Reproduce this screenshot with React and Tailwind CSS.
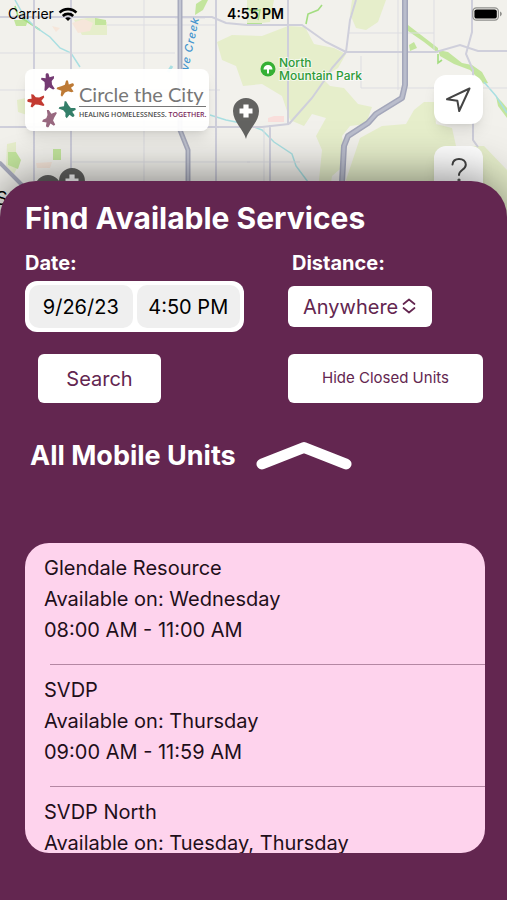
import React, { useState } from 'react';

const units = [
  { name: 'Glendale Resource', days: 'Wednesday', hours: '08:00 AM - 11:00 AM' },
  { name: 'SVDP', days: 'Thursday', hours: '09:00 AM - 11:59 AM' },
  { name: 'SVDP North', days: 'Tuesday, Thursday' },
];

const StatusBar = () => (
  <div className="relative grid grid-cols-3 items-center h-7 pl-2 pr-1 text-sm text-black">
    <div className="flex items-center gap-1">
      <span>Carrier</span>
      <svg width="20" height="15" viewBox="0 0 20 15" fill="none" stroke="black" strokeWidth="2.6">
        <path d="M1.6 5.6 C6 1 14 1 18.4 5.6" />
        <path d="M4.8 9 C7.6 6.2 12.4 6.2 15.2 9" />
        <path d="M10 14 L7.2 11.2 C8.6 9.9 11.4 9.9 12.8 11.2 Z" fill="black" stroke="none" />
      </svg>
    </div>
    <span className="text-center font-semibold">4:55 PM</span>
    <svg className="justify-self-end" width="31" height="14" viewBox="0 0 31 14">
      <rect x="0.8" y="0.8" width="25.6" height="12.4" rx="3.6" fill="#f4f3ee" stroke="#8f8f8c" strokeWidth="1.2" />
      <rect x="2.4" y="2.4" width="22.4" height="9.2" rx="2.2" fill="black" />
      <path d="M28 4.6 C30.4 5.6 30.4 8.4 28 9.4 Z" fill="#8f8f8c" />
    </svg>
  </div>
);

const Pin = ({ x, y }) => (
  <g transform={`translate(${x} ${y})`}>
    <path d="M0 28 C-2 19 -13 11 -13 0 A13 13 0 0 1 13 0 C13 11 2 19 0 28 Z" fill="#636361" />
    <path d="M-2.6 -6.5 H2.6 V-2.6 H6.5 V2.6 H2.6 V6.5 H-2.6 V2.6 H-6.5 V-2.6 H-2.6 Z" fill="white" />
  </g>
);

const MapView = () => (
  <svg
    className="absolute inset-0 w-full h-full"
    viewBox="0 0 507 224"
    preserveAspectRatio="xMidYMin slice"
    fill="none"
    fontFamily="Inter, sans-serif"
  >
    <rect width="507" height="224" fill="#f2f1ec" />

    {/* Parks and hills */}
    <g fill="#e6eecb">
      <path d="M217 42 L232 35 L262 36 L288 26 L305 27 L314 44 L334 48 L346 54 L338 68 L322 78 L330 86 L344 88 L358 104 L372 107 L366 124 L350 126 L342 136 L346 164 L332 176 L330 190 L318 190 L322 150 L316 136 L326 118 L312 114 L304 126 L290 120 L282 96 L262 84 L243 86 L236 66 L222 60 Z" />
      <path d="M352 0 L386 0 L378 22 L366 30 L356 28 L350 14 Z" />
      <path d="M247 0 L274 0 L270 22 L247 25 Z" />
      <path d="M360 138 L382 126 L406 124 L414 110 L424 102 L434 102 L436 124 L452 128 L456 146 L484 146 L507 170 L507 224 L352 224 L346 180 Z" />
      <path d="M74 20 L94 17 L107 22 L107 35 L82 35 Z" />
      <path d="M7 144 L16 142 L16 154 L20 162 L14 174 L6 166 Z" />
      <path d="M17 100 L30 97 L30 116 L18 112 Z" />
    </g>
    <g fill="#f6e6da">
      <path d="M72 23 L84 19 L93 23 L90 31 L78 33 Z" />
      <path d="M36 163 L52 162 L50 168 L37 168 Z" />
      <path d="M52 26 L60 28 L56 32 Z" />
    </g>
    <path d="M274 116 H284 V122 H268 V118 Z" fill="#f9dedb" />
    <g fill="#c3e59d">
      <path d="M14 20 L28 20 L26 26 L16 26 Z" />
      <path d="M95 18 L106 20 L106 25 L95 25 Z" />
      <path d="M53 149 H61 V160 H53 Z" />
      <path d="M8 152 H16 L21 160 L18 169 L8 165 Z" />
      <path d="M196 4 L202 0 H208 L203 10 L195 15 Z" />
      <path d="M438 50 L448 52 L462 63 L472 65 L482 72 L488 83 L484 84 L470 70 L454 64 L440 56 Z" />
      <path d="M409 45 L414 42 L417 48 L410 51 Z" />
      <path d="M408 25 L438 48 L438 53 L424 42 L408 31 Z" />
      <path d="M496 96 L502 102 L507 108 L507 118 L498 106 Z" />
    </g>
    <g stroke="#a3dd80" strokeWidth="1.6">
      <path d="M15 6 L18 16 L28 22 L40 30" />
      <path d="M306 24 L308 14 L318 10 L322 5" />
      <path d="M247 8 L252 11 L260 10 L258 20 M247 24 H262" />
      <path d="M438 54 V63 L442 60" />
    </g>

    {/* Creeks */}
    <g stroke="#a9dfe2" strokeWidth="1.5">
      <path d="M15 0 L24 16 L34 26 L50 37 L60 48 L71 53 L80 67" />
      <path d="M210 115 L226 120 L246 124 L262 130 L274 142 L292 154 L296 166 L308 182" />
      <path d="M484 82 L496 96 L507 113" />
      <path d="M168 72 L172 66" strokeWidth="3" />
    </g>

    {/* Side streets */}
    <g stroke="#dddde2" strokeWidth="1">
      <path d="M0 53 H175 M0 90 H220 M70 162 H250 M144 0 V181 M107 25 H217 M348 33 H434 M361 56 V88 H507 M403 15 V95 M398 0 V90 M434 0 V50" />
      <path d="M205 18 H175 M247 162 H300 M264 128 V181" />
    </g>
    <g stroke="#cfcfdb" strokeWidth="2">
      <path d="M0 17 H212 L226 23 L247 25 M0 127 H262 L289 124 M34 0 V181 M71 0 V70 M71 130 V181 M216 0 V181 M270 125 V181" />
      <path d="M247 25 H302 L326 42 L344 51 L346 52 H436 L460 45 L478 51 H507" />
      <path d="M356 0 L350 20 L346 52 L332 68 L326 78 L312 98 L289 124 M288 0 V124 M472 0 L472 32 L466 54 L473 70 V140 L478 147" />
    </g>

    {/* Highways */}
    <g strokeLinecap="round" strokeLinejoin="round">
      <path d="M180 0 V130 L188 150 V182" stroke="#a8abbd" strokeWidth="5" />
      <path d="M180 0 V130 L188 150 V182" stroke="#c2c5d2" strokeWidth="2" />
      <path d="M405 0 V85 L402 98 L376 114 L368 123 L348 136 L344 146 L342 182" stroke="#a3a6ba" strokeWidth="6" />
      <path d="M405 0 V85 L402 98 L376 114 L368 123 L348 136 L344 146 L342 182" stroke="#babdcc" strokeWidth="3" />
      <path d="M0 163 L22 185" stroke="#a8abbd" strokeWidth="4" />
    </g>

    {/* Labels */}
    <text transform="translate(188 71) rotate(-78)" fill="#4596cf" fontSize="11" fontStyle="italic" fontWeight="500" letterSpacing="1">
      ve Creek
    </text>
    <text x="-4" y="205" fill="black" fontSize="18">S</text>
    <circle cx="268" cy="69" r="7.5" fill="#35b034" />
    <path d="M263.5 69.5 A4.5 4.5 0 0 1 272.5 69.5 H269 V73.5 H267 V69.5 Z" fill="white" />
    <g fill="#2d9b39" stroke="white" strokeWidth="2" strokeOpacity="0.6" paintOrder="stroke" fontSize="12" fontWeight="500">
      <text x="279" y="67">North</text>
      <text x="279" y="80">Mountain Park</text>
    </g>

    <Pin x={48} y={188} />
    <Pin x={72} y={181} />
    <Pin x={246} y={111} />
  </svg>
);

const figure = 'M-1.4 -8.6 C-1 -10.2 1.8 -10 2 -8.2 L2.4 -5 L7.4 -5.6 L7.2 -3.2 L4.2 -0.4 L4 3.4 L6.4 8.4 L4.4 9 L0.4 6 L-4 9.6 L-5.2 8.4 L-4 3 L-3.8 -0.6 L-7.4 -4 L-6.4 -5.8 L-2 -4.6 Z';

const figures = [
  { color: '#743a72', at: 'translate(23 13) rotate(-8)' },
  { color: '#bd7a35', at: 'translate(41 19) rotate(62)' },
  { color: '#347f69', at: 'translate(43 41) rotate(136)' },
  { color: '#98687f', at: 'translate(25 50) rotate(198)' },
  { color: '#c33a31', at: 'translate(11 32) rotate(-88)' },
];

const Logo = () => (
  <div className="flex items-center w-46 h-[62px] rounded-lg bg-white/95 shadow-lg">
    <svg className="shrink-0" width="54" height="62" viewBox="0 0 54 62">
      {figures.map((f) => (
        <path key={f.color} d={figure} fill={f.color} transform={`${f.at} scale(0.9)`} />
      ))}
    </svg>
    <div className="whitespace-nowrap">
      <p className="font-[Lato,sans-serif] text-[20px] leading-6 text-[#777777] border-b border-[#777777]">
        Circle the City
      </p>
      <p className="pt-1 font-['Open_Sans',sans-serif] font-semibold text-[7px] leading-2 text-[#4c4c4c]">
        HEALING HOMELESSNESS. <span className="text-[#7b2a5c]">TOGETHER.</span>
      </p>
    </div>
  </div>
);

const MapButton = ({ label, children }) => (
  <button
    type="button"
    aria-label={label}
    className="flex items-center justify-center size-[49px] rounded-xl bg-white shadow-lg text-[#444444]"
  >
    {children}
  </button>
);

const UnitRow = ({ unit, last }) => (
  <li>
    <div className="pt-[10px] pb-[18px] pl-[19px]">
      <p>{unit.name}</p>
      <p>Available on: {unit.days}</p>
      {unit.hours && <p>{unit.hours}</p>}
    </div>
    {!last && <hr className="ml-[25px] border-[#b487a3]" />}
  </li>
);

const App = () => {
  const [date, setDate] = useState('9/26/23');
  const [time, setTime] = useState('4:50 PM');
  const [distance, setDistance] = useState('Anywhere');

  return (
    <div className="flex flex-col h-screen overflow-hidden bg-[#632650] font-[Inter,sans-serif]">
      {/* Map */}
      <header className="relative shrink-0 h-56">
        <MapView />
        <StatusBar />
        <div className="relative flex items-start justify-between pt-[41px] pl-[25px] pr-6">
          <Logo />
          <div className="flex flex-col gap-[22px] pt-1.5">
            <MapButton label="My location">
              <svg width="28" height="28" viewBox="0 0 28 28" fill="none" stroke="currentColor" strokeWidth="2" strokeLinejoin="round">
                <path d="M24.5 2.5 L2 13.2 L12.4 14.8 L14.2 25 Z" />
              </svg>
            </MapButton>
            <MapButton label="Help">
              <svg width="28" height="28" viewBox="0 0 28 28" fill="none" stroke="currentColor" strokeWidth="2" strokeLinecap="round">
                <path d="M7.5 7.5 C8 3.5 11 2 14 2 C18 2 20.8 4.3 20.8 7.8 C20.8 13 14 12.5 14 18" />
                <circle cx="14" cy="23" r="0.6" />
              </svg>
            </MapButton>
          </div>
        </div>
      </header>

      {/* Search sheet */}
      <main className="relative flex flex-col flex-1 min-h-0 -mt-[43px] pt-[17px] pl-[25px] pr-6 rounded-t-[36px] bg-[#632650] shadow-[0_0_50px_rgba(0,0,0,0.55)] text-white">
        <h1 className="text-[30px] leading-10 font-bold">Find Available Services</h1>

        <form className="grid grid-cols-[219px_1fr] gap-x-11 pt-[13px]" onSubmit={(e) => e.preventDefault()}>
          <label htmlFor="date" className="text-xl leading-6 font-bold">Date:</label>
          <label htmlFor="distance" className="pl-1 text-xl leading-6 font-bold">Distance:</label>

          <div className="grid grid-cols-2 gap-1 mt-1.5 h-[51px] p-1 rounded-xl bg-white text-xl text-black">
            <input
              id="date"
              value={date}
              onChange={(e) => setDate(e.target.value)}
              className="min-w-0 rounded-[10px] bg-[#efefef] text-center"
            />
            <input
              aria-label="Time"
              value={time}
              onChange={(e) => setTime(e.target.value)}
              className="min-w-0 rounded-[10px] bg-[#efefef] text-center"
            />
          </div>
          <div className="relative self-center mt-1.5 w-36">
            <select
              id="distance"
              value={distance}
              onChange={(e) => setDistance(e.target.value)}
              className="appearance-none w-full h-[41px] pl-[15px] rounded-md bg-white text-xl text-[#632650]"
            >
              <option>Anywhere</option>
            </select>
            <svg
              className="absolute right-4 top-3 pointer-events-none"
              width="14"
              height="16"
              viewBox="0 0 14 16"
              fill="none"
              stroke="#632650"
              strokeWidth="1.7"
              strokeLinecap="round"
              strokeLinejoin="round"
            >
              <path d="M1.5 6 L7 1.5 L12.5 6 M1.5 10 L7 14.5 L12.5 10" />
            </svg>
          </div>

          <button type="submit" className="mt-[22px] ml-[13px] w-[123px] h-[49px] rounded-md bg-white text-xl text-[#632650]">
            Search
          </button>
          <button type="button" className="mt-[22px] h-[49px] rounded-md bg-white text-[15px] text-[#632650]">
            Hide Closed Units
          </button>
        </form>

        <div className="flex items-center gap-5 mt-[33px] pl-[5px]">
          <h2 className="text-[27px] leading-10 font-bold">All Mobile Units</h2>
          <button type="button" aria-label="Collapse list">
            <svg width="96" height="30" viewBox="0 0 96 30" fill="none" stroke="white" strokeWidth="11" strokeLinecap="round" strokeLinejoin="round">
              <path d="M6 23 L48 6.5 L90 23" />
            </svg>
          </button>
        </div>

        <ul className="flex-1 min-h-0 mt-[67px] mb-[47px] -mr-0.5 overflow-y-auto [scrollbar-width:none] rounded-3xl bg-[#fed3ed] text-xl leading-[31px] text-[#1f0f1a]">
          {units.map((unit, i) => (
            <UnitRow key={unit.name} unit={unit} last={i === units.length - 1} />
          ))}
        </ul>
      </main>
    </div>
  );
};

export default App;
